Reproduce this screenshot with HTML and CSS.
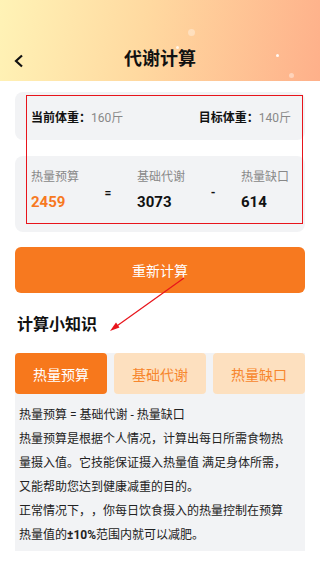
FILE: index.html
```html
<!DOCTYPE html>
<html>
<head>
	<title>代谢计算</title>
	<meta charset="utf-8">
	<link rel="stylesheet" href="styles.css">
</head>
<body>
<div class="page">

	<div class="header">
		<span class="dot dot1"></span>
		<span class="dot dot2"></span>
		<span class="dot dot3"></span>
		<span class="dot dot4"></span>
		<svg class="back" width="10" height="14" viewBox="0 0 10 14">
			<polyline points="8,1.5 2,7 8,12.5" fill="none" stroke="#111" stroke-width="2.2"/>
		</svg>
		<h1>代谢计算</h1>
	</div>

	<div class="main">

		<div class="card weights">
			<p><b>当前体重：</b><span class="grey">160斤</span></p>
			<p><b>目标体重：</b><span class="grey">140斤</span></p>
		</div>

		<div class="card formula">
			<div class="col">
				<p class="label">热量预算</p>
				<p class="num --orange">2459</p>
			</div>
			<div class="sign">=</div>
			<div class="col">
				<p class="label">基础代谢</p>
				<p class="num">3073</p>
			</div>
			<div class="sign">-</div>
			<div class="col">
				<p class="label">热量缺口</p>
				<p class="num">614</p>
			</div>
		</div>

		<button class="btn">重新计算</button>

		<h2>计算小知识</h2>

		<div class="tips">
			<div class="tabs">
				<div class="tab active">热量预算</div>
				<div class="tab">基础代谢</div>
				<div class="tab">热量缺口</div>
			</div>
			<div class="text">
				<p>热量预算 = 基础代谢 - 热量缺口</p>
				<p>热量预算是根据个人情况，计算出每日所需食物热量摄入值。它技能保证摄入热量值 满足身体所需，又能帮助您达到健康减重的目的。</p>
				<p>正常情况下，，你每日饮食摄入的热量控制在预算热量值的<b>±10%</b>范围内就可以减肥。</p>
			</div>
		</div>
	</div>

	<!-- annotation overlay -->
	<div class="mark"></div>
	<svg class="arrow" width="320" height="568" viewBox="0 0 320 568">
		<line x1="184" y1="278" x2="114" y2="328" stroke="#e8141b" stroke-width="1.2"/>
		<polygon points="110,331 116,322.5 119.5,327.5" fill="#e8141b"/>
	</svg>

</div>
</body>
</html>
```

FILE: styles.css
```css
* {
	box-sizing: border-box;
}

body {
	margin: 0;
	font-family: Roboto, "Noto Sans CJK SC", sans-serif;
	color: #222;
	background: #fff;
}

p {
	margin: 0;
}

.page {
	position: relative;
	width: 320px;
	min-height: 568px;
}

/* header */

.header {
	position: relative;
	height: 81px;
	background: linear-gradient(100deg, #fff3b6 0%, #ffd9a0 45%, #feb08a 100%);
	display: flex;
	align-items: flex-end;
	justify-content: center;
	padding-bottom: 10px;
}

.header h1 {
	margin: 0;
	font-size: 18px;
	line-height: 24px;
	font-weight: bold;
	color: #111;
}

.back {
	position: absolute;
	left: 14px;
	top: 54px;
}

.dot {
	position: absolute;
	border-radius: 50%;
	background: #fff;
}
.dot1 { left: 188px; top: 29px; width: 7px; height: 7px; opacity: .35; }
.dot2 { left: 176px; top: 46px; width: 3px; height: 3px; opacity: .8; }
.dot3 { left: 276px; top: 54px; width: 3px; height: 3px; opacity: .9; }
.dot4 { left: 289px; top: 73px; width: 5px; height: 5px; opacity: .4; }

/* content */

.main {
	padding: 11px 15px 0;
}

.card {
	background: #f2f3f5;
	border-radius: 8px;
}

.weights {
	height: 48px;
	display: flex;
	align-items: center;
	justify-content: space-between;
	padding: 0 14px 0 16px;
	font-size: 12px;
}

.weights b {
	color: #111;
}

.grey {
	color: #888;
}

.formula {
	margin-top: 16px;
	height: 76px;
	padding: 12px 16px 0 16px;
	display: flex;
	justify-content: space-between;
	align-items: flex-start;
}

.label {
	font-size: 12px;
	line-height: 18px;
	color: #888;
}

.num {
	margin-top: 6px;
	font-size: 15px;
	line-height: 20px;
	font-weight: bold;
	color: #111;
}

.--orange {
	color: #f7791f;
}

.sign {
	margin-top: 18px;
	font-size: 12px;
	font-weight: bold;
	color: #111;
}

.btn {
	display: block;
	width: 100%;
	height: 46px;
	margin-top: 15px;
	border: none;
	border-radius: 6px;
	background: #f7791f;
	color: #fff;
	font-family: inherit;
	font-size: 14px;
}

h2 {
	margin: 21px 0 0 2px;
	font-size: 16px;
	line-height: 22px;
	font-weight: bold;
	color: #111;
}

.tips {
	margin-top: 17px;
	background: #f2f3f5;
}

.tabs {
	display: flex;
	gap: 7px;
}

.tab {
	flex: 1;
	height: 41px;
	border-radius: 4px;
	background: #fde0bf;
	color: #f7862d;
	font-size: 14px;
	display: flex;
	align-items: center;
	justify-content: center;
}

.tab.active {
	background: #f7781c;
	color: #fff;
}

.text {
	padding: 9px 18px 4px 4px;
	font-size: 12px;
	line-height: 24px;
	color: #222;
	text-spacing-trim: space-all;
}

/* red annotation */

.mark {
	position: absolute;
	left: 26px;
	top: 95px;
	width: 277px;
	height: 129px;
	border: 1px solid #e8141b;
}

.arrow {
	position: absolute;
	left: 0;
	top: 0;
	pointer-events: none;
}
```
